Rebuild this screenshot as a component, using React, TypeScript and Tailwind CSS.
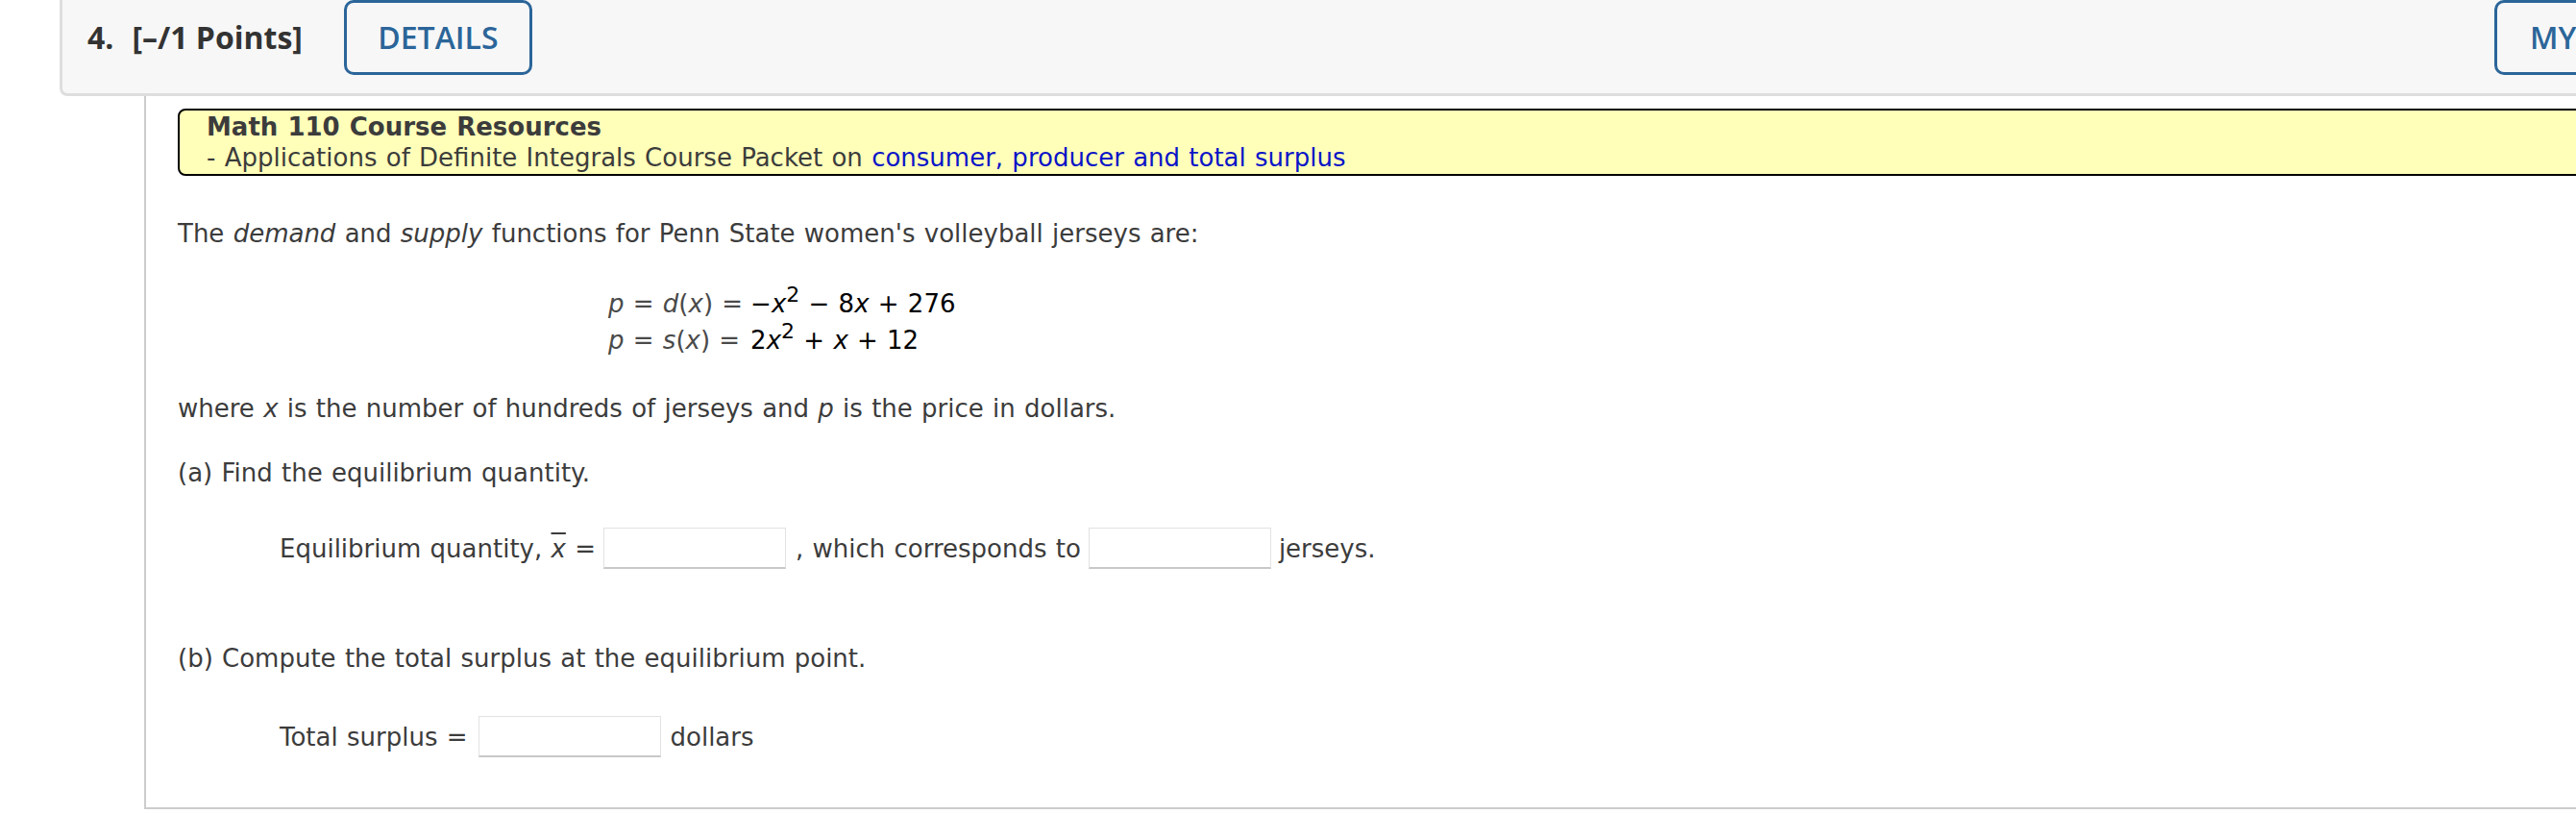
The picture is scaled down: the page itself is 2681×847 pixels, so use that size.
const body = "font-['DejaVu_Sans',Verdana,sans-serif]";

function AnswerBox({ className = "" }: { className?: string }) {
  return (
    <span
      className={`inline-block w-[190px] h-[43px] bg-white border border-[#e2e2e2] border-b-2 border-b-[#c8c8c8] ${className}`}
    />
  );
}

export default function App() {
  return (
    <div className="w-[2681px] h-[847px] overflow-hidden bg-white">
      <div className="ml-[62px] w-[2800px]">
        {/* question header */}
        <header className="flex h-[100px] bg-[#f7f7f7] border-l-[3px] border-b-[3px] border-[#dedede] rounded-bl-[8px] pl-[26px] font-['Open_Sans',sans-serif] text-[#333]">
          <div className="flex items-center h-[78px] text-[32px] font-bold">
            <span>4.</span>
            <span className="ml-[19px]">[–/1 Points]</span>
          </div>
          <button className="ml-[43px] h-[78px] w-[196px] border-[3px] border-[#2b6599] rounded-[10px] text-[#2b6599] text-[32px] font-semibold flex items-center justify-center">
            DETAILS
          </button>
          <button className="ml-[2042px] h-[78px] w-[240px] border-[3px] border-[#2b6599] rounded-[10px] text-[#2b6599] text-[32px] font-semibold flex items-center pl-[34px] whitespace-nowrap">
            MY NOTES
          </button>
        </header>

        {/* question body */}
        <div className={`ml-[88px] h-[742px] border-l-2 border-b-2 border-[#cccccc] pl-[33px] pt-[13px] ${body} text-[26px] leading-[32px] text-[#3c3c3c] [word-spacing:1px]`}>
          <div className="w-[2560px] border-2 border-black rounded-l-[8px] bg-[#ffffb9] pl-[28px] py-[1px]">
            <div className="font-bold">Math 110 Course Resources</div>
            <div>
              - Applications of Definite Integrals Course Packet on{" "}
              <a className="text-[#0a14c8]">consumer, producer and total surplus</a>
            </div>
          </div>

          <p className="mt-[44px]">
            The <i>demand</i> and <i>supply</i> functions for Penn State women's volleyball jerseys are:
          </p>

          <div className="mt-[38px] ml-[448px] grid grid-cols-[auto_auto] justify-start gap-x-[8px] leading-[38px]">
            <span className="text-[#4a4a4a]">
              <i>p</i> = <i>d</i>(<i>x</i>) =
            </span>
            <span className="text-black">
              −<i>x</i>
              <sup className="text-[22px]">2</sup> − 8<i>x</i> + 276
            </span>
            <span className="text-[#4a4a4a]">
              <i>p</i> = <i>s</i>(<i>x</i>) =
            </span>
            <span className="text-black">
              2<i>x</i>
              <sup className="text-[22px]">2</sup> + <i>x</i> + 12
            </span>
          </div>

          <p className="mt-[36px]">
            where <i>x</i> is the number of hundreds of jerseys and <i>p</i> is the price in dollars.
          </p>

          <p className="mt-[35px]">(a) Find the equilibrium quantity.</p>

          <div className="mt-[41px] pl-[106px] flex items-center h-[43px] whitespace-nowrap">
            <span>
              Equilibrium quantity, <i className="overline">x</i> =
            </span>
            <AnswerBox className="ml-[8px]" />
            <span className="ml-[10px]">, which corresponds to</span>
            <AnswerBox className="ml-[8px]" />
            <span className="ml-[8px]">jerseys.</span>
          </div>

          <p className="mt-[77px]">(b) Compute the total surplus at the equilibrium point.</p>

          <div className="mt-[44px] pl-[106px] flex items-center h-[43px] whitespace-nowrap">
            <span>Total surplus =</span>
            <AnswerBox className="ml-[11px]" />
            <span className="ml-[10px]">dollars</span>
          </div>
        </div>
      </div>
    </div>
  );
}
